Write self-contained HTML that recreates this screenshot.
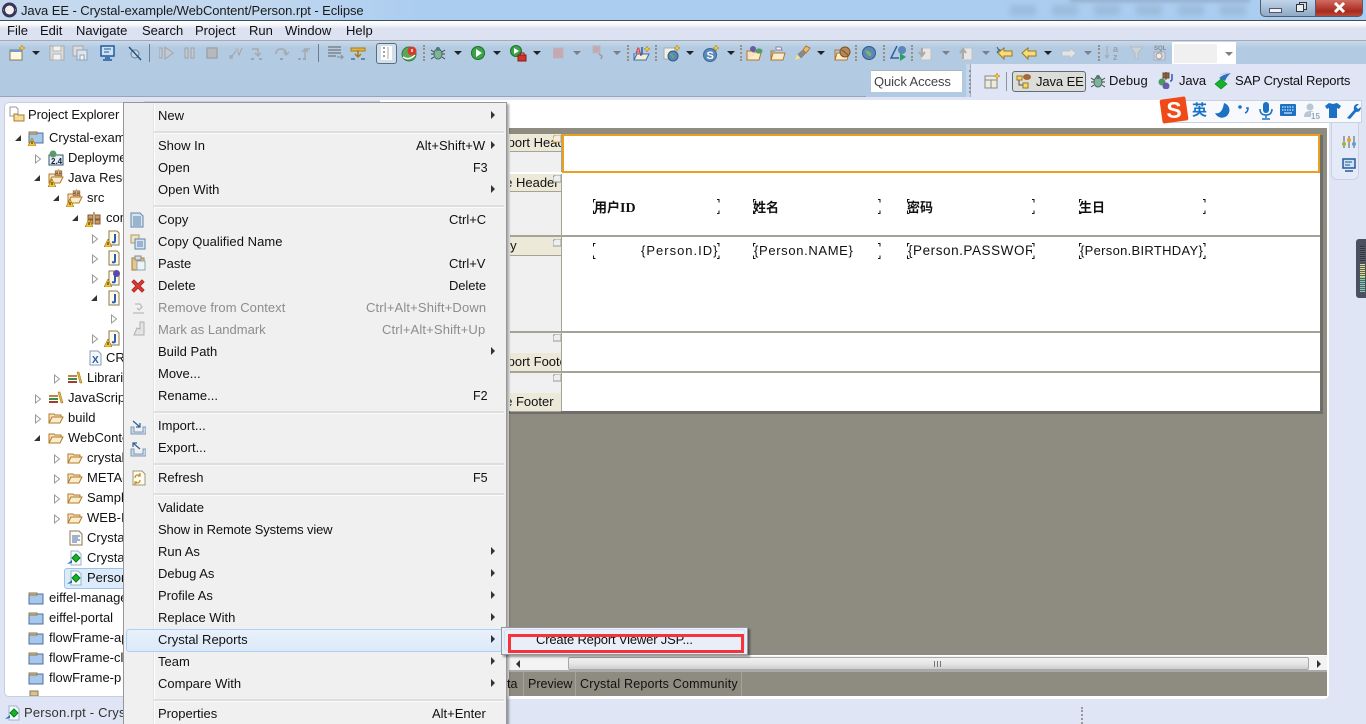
<!DOCTYPE html>
<html><head><meta charset="utf-8"><title>Java EE - Crystal-example/WebContent/Person.rpt - Eclipse</title>
<style>
html,body{margin:0;padding:0;width:1366px;height:724px;overflow:hidden;background:#dfe5f5}
body{position:relative;font:13px "Liberation Sans","Noto Sans CJK SC",sans-serif;color:#111}
div,span,svg{position:absolute}
.t{white-space:nowrap;line-height:16px;height:16px}
.g{color:#8d8d8d}
.d{width:0;height:0;border-left:4px solid transparent;border-right:4px solid transparent;border-top:4px solid #222;top:51px}
.dg{border-top-color:#7a7f88}
.s{width:1px;height:16px;top:45px;border-left:2px dotted #998f7e}
.ic{width:16px;height:16px}
.ta{width:0;height:0;border-left:5px solid #333;border-top:4px solid transparent;border-bottom:4px solid transparent}
.sep{left:154px;width:350px;height:2px;background:#dedede;border-bottom:1px solid #fafafa}
.ar{left:491px;width:0;height:0;border-left:4px solid #333;border-top:4px solid transparent;border-bottom:4px solid transparent}
.c{width:5px;height:5px;border:0 solid #111}
.rl{left:510px;width:51px;background:#ece9d8;border-bottom:1px solid #a5a296;overflow:hidden;height:18px;line-height:17px;white-space:nowrap}
</style></head><body>
<svg width="0" height="0" style="position:absolute"><defs>
<symbol id="fo" viewBox="0 0 16 16"><path d="M1 13V4h5l1 1h6v2" fill="#f7e3bd" stroke="#b07a2c"/><path d="M1 13l3-6h11l-3 6z" fill="#fbeccc" stroke="#b07a2c"/></symbol>
<symbol id="pj" viewBox="0 0 16 16"><path d="M1 4h14v10H1z" fill="#a8c7ec" stroke="#4d6f9c"/><path d="M1 3h8v2H1z" fill="#d9c28f" stroke="#8a7a55"/></symbol>
<symbol id="jf" viewBox="0 0 16 16"><path d="M3 1h8l2 2v12H3z" fill="#fdf9ea" stroke="#8d7a4c"/><path d="M9 4v7q0 2-3 1" fill="none" stroke="#2a5db0" stroke-width="2"/></symbol>
<symbol id="wn" viewBox="0 0 8 8"><path d="M4 0l4 8H0z" fill="#f4c430" stroke="#9a6d10" stroke-width=".6"/><path d="M4 3v3" stroke="#222"/></symbol>
<symbol id="rp" viewBox="0 0 16 16"><path d="M4 1h7l3 3v11H4z" fill="#f7fbff" stroke="#9db2c9"/><path d="M9 4l4 4-4 4-4-4z" fill="#12b52a" stroke="#0a7a1a"/><path d="M0 14l5-4v3z" fill="#2a6fc0"/></symbol>
<symbol id="pk" viewBox="0 0 16 16"><path d="M2 5h5v4H2zM9 5h5v4H9zM2 10h5v4H2zM9 10h5v4H9z" fill="#c69c6d" stroke="#8a5a2a"/><path d="M7 2h2v3H7z" fill="#c69c6d"/></symbol>
<symbol id="lb" viewBox="0 0 16 16"><path d="M1 5h9v2H1z" fill="#b88a3a"/><path d="M1 8h9v2H1z" fill="#3a8a5a"/><path d="M1 11h9v2H1z" fill="#a83a2a"/><path d="M10 2l2 0 3 11h-2z" fill="#e8b23a" stroke="#9a6d10" stroke-width=".5"/></symbol>
</defs></svg>

<!-- title bar -->
<div style="left:0;top:0;width:1366px;height:20px;background:linear-gradient(90deg,#c5d9ee 0,#c2d8ef 250px,#abcdf0 420px,#abcdf0 100%)"></div>
<div style="left:1010px;top:5px;width:240px;height:11px;background:repeating-linear-gradient(90deg,#8da8c6 0 26px,#abcdf0 26px 42px);filter:blur(3px);opacity:.45"></div>
<div style="left:1070px;top:-4px;width:180px;height:6px;background:#7d8ea6;filter:blur(2px);opacity:.5"></div>
<svg style="left:1px;top:1px" width="17" height="18"><circle cx="8.5" cy="9" r="7.5" fill="#3a3556"/><circle cx="8.5" cy="9" r="4.5" fill="#f2f2f2"/><path d="M2 9h13" stroke="#ddd" stroke-width=".7" stroke-dasharray="1 1"/></svg>
<div class="t" style="left:21px;top:3px;font-size:13px;letter-spacing:-.07px;color:#1a1a1a">Java EE - Crystal-example/WebContent/Person.rpt - Eclipse</div>
<div style="left:1260px;top:0;width:28px;height:16px;border:1px solid #4e5d70;border-top:0;border-radius:0 0 0 5px;background:linear-gradient(#c0d4e9,#8fa9c4)"></div>
<div style="left:1289px;top:0;width:26px;height:16px;border:1px solid #4e5d70;border-top:0;border-left:0;background:linear-gradient(#c0d4e9,#8fa9c4)"></div>
<div style="left:1316px;top:0;width:46px;height:16px;border:1px solid #4e5d70;border-top:0;border-left:0;border-radius:0 0 5px 0;background:linear-gradient(#d06a60,#a82a1e 70%,#b84a3a)"></div>
<div style="left:1269px;top:8px;width:11px;height:3px;background:#eef2f6;border:1px solid #556"></div>
<div style="left:1299px;top:2px;width:6px;height:6px;border:1px solid #333;background:#cfdbe8"></div>
<div style="left:1296px;top:4px;width:6px;height:6px;border:1px solid #333;background:#e6edf4"></div>
<svg style="left:1333px;top:1px" width="14" height="13"><path d="M2 2l9 9M11 2l-9 9" stroke="#fff" stroke-width="3"/></svg>

<!-- menu bar -->
<div style="left:0;top:20px;width:1366px;height:1px;background:#3f4c5c"></div>
<div style="left:0;top:21px;width:1366px;height:19px;background:linear-gradient(#fff 0,#f4f6fa 20%,#dde2f2 40%,#dde2f2 100%)"></div>
<div style="left:0;top:40px;width:1366px;height:1px;background:#a3a9b6"></div>
<div class="t" style="left:7px;top:23px">File</div>
<div class="t" style="left:40px;top:23px">Edit</div>
<div class="t" style="left:76px;top:23px">Navigate</div>
<div class="t" style="left:142px;top:23px">Search</div>
<div class="t" style="left:195px;top:23px">Project</div>
<div class="t" style="left:249px;top:23px">Run</div>
<div class="t" style="left:285px;top:23px">Window</div>
<div class="t" style="left:346px;top:23px">Help</div>

<!-- toolbar -->
<div style="left:0;top:41px;width:1366px;height:56px;background:linear-gradient(#c8d9ea 0,#b2cae2 7px,#b1cae2 100%)"></div>
<div style="left:0;top:96px;width:866px;height:1px;background:#9aa4b3"></div>
<div style="left:0;top:97px;width:1366px;height:3px;background:#dfe5f5"></div>
<div style="left:969px;top:64px;width:397px;height:36px;background:#dfe5f5"></div>
<div style="left:966px;top:64px;width:4px;height:33px;background:#c5d6ea;border-right:1px solid #9fb0c4"></div>

<!-- toolbar icons -->
<svg style="left:8px;top:44px" width="18" height="18"><path d="M2 6h12v10H2z" fill="#fff8e0" stroke="#8a7a55"/><path d="M2 6h12v2H2z" fill="#6f9bd0"/><path d="M14 1l1 2 2 1-2 1-1 2-1-2-2-1 2-1z" fill="#f6c93a" stroke="#a87c10" stroke-width=".5"/></svg>
<div class="d" style="left:32px"></div>
<svg style="left:49px;top:45px" width="16" height="16"><path d="M1 1h14v14H1z" fill="#dcdcdc" stroke="#a8a8a8"/><path d="M4 1h8v5H4zM4 9h8v6H4z" fill="#f2f2f2" stroke="#b5b5b5"/></svg>
<svg style="left:72px;top:45px" width="16" height="16"><path d="M1 1h10v10H1z" fill="#dcdcdc" stroke="#a8a8a8"/><path d="M5 5h10v10H5z" fill="#dde6ee" stroke="#8fa3b5"/><path d="M8 10h4v5H8z" fill="#f4f4f4" stroke="#8fa3b5"/></svg>
<svg style="left:100px;top:45px" width="15" height="16"><path d="M1 1h13v10H1z" fill="#cfe1f5" stroke="#215a9c" stroke-width="1.5"/><path d="M4 4h7M4 7h5" stroke="#215a9c"/><path d="M5 13h5M3 15h9" stroke="#215a9c" stroke-width="1.5"/></svg>
<svg style="left:128px;top:46px" width="15" height="15"><circle cx="7" cy="8" r="4" fill="#c9d6e3" stroke="#6a7f95"/><path d="M1 1l12 13" stroke="#1f4f86" stroke-width="1.4"/></svg>
<div style="left:149px;top:44px;width:1px;height:18px;background:#6f7d8c"></div>
<svg style="left:159px;top:46px" width="16" height="14"><path d="M0 2h3v10H0z" fill="#c6c9cd" stroke="#a0a4a8"/><path d="M6 1l8 6-8 6z" fill="#c6c9cd" stroke="#a0a4a8"/></svg>
<svg style="left:184px;top:46px" width="12" height="14"><path d="M1 2h3v10H1zM7 2h3v10H7z" fill="#c6c9cd" stroke="#a0a4a8"/></svg>
<svg style="left:206px;top:46px" width="12" height="14"><path d="M1 2h10v10H1z" fill="#b7b9bc" stroke="#a0a4a8" stroke-width="1.5"/></svg>
<svg style="left:228px;top:46px" width="15" height="14"><path d="M3 11L9 4l2 5 3-7" fill="none" stroke="#a0a4a8"/><circle cx="3" cy="11" r="2" fill="#a8acb0"/><circle cx="9" cy="4" r="2" fill="#b8bcc0"/></svg>
<svg style="left:250px;top:46px" width="16" height="15"><path d="M2 3h6v6M5 7l3 3 3-3" fill="none" stroke="#a6a9ad" stroke-width="1.5"/><path d="M1 13h3M9 13h3" stroke="#8c9097" stroke-width="1.3"/></svg>
<svg style="left:274px;top:46px" width="16" height="15"><path d="M2 8q0-5 5-5t5 5M10 6l2 3 3-3" fill="none" stroke="#a6a9ad" stroke-width="1.5"/><path d="M6 13h3" stroke="#8c9097" stroke-width="1.3"/></svg>
<svg style="left:297px;top:46px" width="16" height="15"><path d="M8 12V3h5M5 6l3-3 3 3" fill="none" stroke="#a6a9ad" stroke-width="1.5"/><path d="M1 13h3M6 13h3" stroke="#8c9097" stroke-width="1.3"/></svg>
<div style="left:318px;top:44px;width:1px;height:18px;background:#6f7d8c"></div>
<svg style="left:327px;top:45px" width="18" height="16"><path d="M1 2h13M1 5h13M1 8h13M1 11h8" stroke="#777" stroke-width="1.3"/><path d="M10 12h6M14 10l2 2-2 2" fill="none" stroke="#8a97a6" stroke-width="1.3"/></svg>
<svg style="left:350px;top:45px" width="17" height="16"><path d="M1 3h14v3H1z" fill="#e8b344" stroke="#a87c10"/><path d="M8 5v6M5 9l3 3 3-3" fill="none" stroke="#a87c10" stroke-width="1.5"/><path d="M1 14h4M11 14h4" stroke="#2f5f9a" stroke-width="1.2"/></svg>
<div style="left:376px;top:43px;width:19px;height:19px;border:1px solid #5f6b78;border-radius:3px;background:#d0dfee"></div>
<svg style="left:380px;top:46px" width="13" height="14"><path d="M1 0h11v14H1z" fill="#fff"/><path d="M3 2h2M3 6h2M3 10h2" stroke="#444"/><path d="M8 1v12" stroke="#aaa"/></svg>
<svg style="left:401px;top:45px" width="17" height="17"><circle cx="8" cy="9" r="7" fill="#5aa75a" stroke="#2e7a32"/><path d="M2 12q6 4 12-2" fill="none" stroke="#fff" stroke-width="1.5"/><circle cx="11" cy="6" r="4.5" fill="#d83a2a"/><path d="M11 4v3" stroke="#fff" stroke-width="1.3"/></svg>
<div class="s" style="left:423px"></div>
<svg style="left:430px;top:45px" width="16" height="16"><ellipse cx="8" cy="9" rx="4" ry="5" fill="#7eb59a" stroke="#3e6f5a"/><circle cx="8" cy="4" r="2" fill="#577"/><path d="M1 5l3 2M1 9h3M1 14l3-2M15 5l-3 2M15 9h-3M15 14l-3-2" stroke="#444"/></svg>
<div class="d" style="left:454px"></div>
<svg style="left:471px;top:46px" width="14" height="14"><circle cx="7" cy="7" r="6.5" fill="#3da34a" stroke="#1d6f2a"/><path d="M5 3l6 4-6 4z" fill="#fff"/></svg>
<div class="d" style="left:493px"></div>
<svg style="left:510px;top:45px" width="17" height="17"><circle cx="6" cy="6" r="5.5" fill="#3da34a" stroke="#1d6f2a"/><path d="M4 3l5 3-5 3z" fill="#fff"/><path d="M8 10h8v6H8z" fill="#d0342a" stroke="#8a1d16"/><path d="M10 10V8h4v2" fill="none" stroke="#8a1d16"/></svg>
<div class="d" style="left:533px"></div>
<svg style="left:553px;top:47px" width="11" height="12"><path d="M0 1h10v10H0z" fill="#c8a8b0" stroke="#b5b8bc"/></svg>
<div class="d dg" style="left:573px"></div>
<svg style="left:592px;top:45px" width="13" height="15"><path d="M1 1h7v7H1z" fill="#c8a8b0" stroke="#b5b8bc"/><path d="M7 9l3 2-1 3" fill="none" stroke="#99a" stroke-width="1.5"/></svg>
<div class="d dg" style="left:613px"></div>
<div class="s" style="left:627px"></div>
<svg style="left:633px;top:45px" width="18" height="17"><path d="M1 15l3-6h12l-3 6z" fill="#fbeccc" stroke="#3a6fae"/><path d="M1 15V8" stroke="#3a6fae"/><text x="2" y="9" font-size="9" font-weight="bold" fill="#d44">A</text><path d="M9 2v6q0 2-2 2" fill="none" stroke="#2a5db0" stroke-width="1.5"/><path d="M14 1l1 2 2 1-2 1-1 2-1-2-2-1 2-1z" fill="#f6c93a" stroke="#a87c10" stroke-width=".5"/></svg>
<div class="s" style="left:655px"></div>
<svg style="left:663px;top:45px" width="17" height="17"><path d="M1 3h11v11H1z" fill="#f1f1e8" stroke="#aaa"/><circle cx="10" cy="11" r="5" fill="#5a88b8" stroke="#34597f"/><path d="M7 9q3 1 3 4" stroke="#6fae5a" fill="none" stroke-width="1.5"/><path d="M14 0l1 2 2 1-2 1-1 2-1-2-2-1 2-1z" fill="#f6c93a" stroke="#a87c10" stroke-width=".5"/></svg>
<div class="d" style="left:686px"></div>
<svg style="left:703px;top:45px" width="17" height="17"><circle cx="7" cy="10" r="6.5" fill="#5a8abb" stroke="#3b6794"/><text x="3.500" y="14" font-size="11" font-weight="bold" fill="#fff" font-family="Liberation Sans">S</text><path d="M13 0l1 2 2 1-2 1-1 2-1-2-2-1 2-1z" fill="#f6c93a" stroke="#a87c10" stroke-width=".5"/></svg>
<div class="d" style="left:727px"></div>
<div class="s" style="left:740px"></div>
<svg style="left:746px;top:45px" width="17" height="17"><path d="M1 15l2-7h12l-2 7z" fill="#fbeccc" stroke="#b07a2c"/><path d="M1 15V6h5l1 1h6" fill="#f7e3bd" stroke="#b07a2c"/><circle cx="7" cy="4" r="3" fill="#6a5aa8"/><ellipse cx="13" cy="6" rx="3.500" ry="2.500" fill="#4da06a"/></svg>
<svg style="left:770px;top:46px" width="16" height="15"><path d="M1 14l2-7h12l-2 7z" fill="#fbeccc" stroke="#b07a2c"/><path d="M1 14V5h4" fill="none" stroke="#b07a2c"/><path d="M6 1h5l1 3H6z" fill="#f3f5f8" stroke="#889"/></svg>
<svg style="left:794px;top:45px" width="17" height="16"><path d="M1 15l2-5 3 3z" fill="#fbe67a"/><path d="M4 9l3 4 5-5-3-3z" fill="#8a8a8a" stroke="#666" stroke-width=".5"/><path d="M9 5l3-4 4 2-4 5z" fill="#f0b878" stroke="#b07a2c"/></svg>
<div class="d" style="left:817px"></div>
<svg style="left:834px;top:46px" width="17" height="15"><path d="M1 14l2-7h12l-2 7z" fill="#fbeccc" stroke="#b07a2c"/><path d="M1 14V4h5l1 2" fill="none" stroke="#b07a2c"/><circle cx="11" cy="6" r="5" fill="#b88858" stroke="#7a5028"/><path d="M8 4l6 5" stroke="#7a5028"/></svg>
<div class="s" style="left:855px"></div>
<svg style="left:862px;top:46px" width="14" height="14"><circle cx="7" cy="7" r="6.500" fill="#5a88b8" stroke="#2f5a86"/><path d="M3 5q3-1 5 1t1 4q-3 0-4-2z" fill="#8ab062"/></svg>
<div class="s" style="left:883px"></div>
<svg style="left:890px;top:45px" width="17" height="17"><circle cx="12" cy="5" r="4" fill="#5a88b8"/><path d="M7 1L1 13h8" fill="none" stroke="#2f5f9a" stroke-width="1.400"/><path d="M10 8l6 4-6 4z" fill="#2aa060"/></svg>
<div class="s" style="left:911px"></div>
<svg style="left:918px;top:45px" width="14" height="16"><path d="M3 3h10v12H3z" fill="#e6e6e6" stroke="#c0c0c0"/><path d="M4 3v7M1 7l3 4 3-4" fill="none" stroke="#aaa" stroke-width="2"/></svg>
<div class="d dg" style="left:942px"></div>
<svg style="left:959px;top:45px" width="14" height="16"><path d="M3 3h10v12H3z" fill="#e6e6e6" stroke="#c0c0c0"/><path d="M4 14V6M1 8l3-4 3 4" fill="none" stroke="#aaa" stroke-width="2"/></svg>
<div class="d dg" style="left:982px"></div>
<svg style="left:996px;top:45px" width="17" height="15"><path d="M1 2l1 2 2 1-2 1-1 2" fill="none" stroke="#2f5f9a"/><path d="M2 8l6-5v3h8v5H8v3z" fill="#f6dc7a" stroke="#9a7a20"/></svg>
<svg style="left:1021px;top:45px" width="16" height="15"><path d="M1 8l6-5v3h8v5H7v3z" fill="#f6dc7a" stroke="#9a7a20"/></svg>
<div class="d" style="left:1044px"></div>
<svg style="left:1061px;top:45px" width="16" height="15"><path d="M15 8L9 3v3H1v5h8v3z" fill="#e2e4e6" stroke="#c0c4c8"/></svg>
<div class="d dg" style="left:1084px"></div>
<div class="s" style="left:1098px"></div>
<svg style="left:1104px;top:44px" width="18" height="17"><path d="M3 2v12M1 11l2 3 2-3" fill="none" stroke="#a3a8ae"/><text x="9" y="8" font-size="9" font-weight="bold" fill="#9a9fa5" font-family="Liberation Sans">a</text><text x="9" y="16" font-size="9" font-weight="bold" fill="#9a9fa5" font-family="Liberation Sans">z</text></svg>
<svg style="left:1130px;top:46px" width="13" height="14"><path d="M0 1h13L8 7v6H5V7z" fill="#cdd3d9" stroke="#b5bac0"/></svg>
<svg style="left:1151px;top:44px" width="18" height="18"><text x="3" y="6" font-size="6" font-weight="bold" fill="#888" font-family="Liberation Sans">SQL</text><path d="M3 8h11v8H3z" fill="#d4d9df" stroke="#aab"/><circle cx="8" cy="12" r="3" fill="#eee" stroke="#999"/></svg>
<div style="left:1172px;top:42px;width:64px;height:22px;background:#fff"></div>
<div style="left:1174px;top:44px;width:43px;height:19px;background:#f0f0f0"></div>
<div class="d dg" style="left:1225px;top:52px"></div>

<!-- quick access + perspectives -->
<div class="t" style="left:871px;top:70px;width:91px;height:22px;background:#fff;border-top:1px solid #a9b4c0;box-sizing:border-box;padding:2px 0 0 3px;color:#444;line-height:18px;letter-spacing:-.1px">Quick Access</div>
<div style="left:969px;top:70px;border-left:2px dotted #8a93a0;height:23px;width:0"></div>
<svg style="left:984px;top:73px" width="16" height="16"><path d="M1 3h12v12H1z" fill="#f2ead6" stroke="#7f8a96"/><path d="M1 7h12M7 7v8" stroke="#7f8a96"/><path d="M13 0l1 2 2 1-2 1-1 2-1-2-2-1 2-1z" fill="#f6c93a" stroke="#a87c10" stroke-width=".5"/></svg>
<div style="left:1006px;top:72px;width:1px;height:19px;background:#8a93a0"></div>
<div style="left:1012px;top:71px;width:72px;height:19px;border:1px solid #5f6b78;border-radius:3px;background:#dcdcd8"></div>
<svg style="left:1016px;top:73px" width="17" height="16"><path d="M1 3h5v4H1zM7 10h5v5H7z" fill="#f6d96a" stroke="#9a7a20"/><path d="M3 7v5h4" fill="none" stroke="#555"/><ellipse cx="11" cy="4" rx="4" ry="3" fill="#a5693a"/></svg>
<div class="t" style="left:1036px;top:74px;letter-spacing:-.1px">Java EE</div>
<svg style="left:1090px;top:73px" width="16" height="16"><ellipse cx="8" cy="9" rx="4" ry="5" fill="#7eb59a" stroke="#3e6f5a"/><circle cx="8" cy="4" r="2" fill="#577"/><path d="M1 5l3 2M1 9h3M1 14l3-2M15 5l-3 2M15 9h-3M15 14l-3-2" stroke="#444"/></svg>
<div class="t" style="left:1109px;top:73px;letter-spacing:.1px">Debug</div>
<svg style="left:1158px;top:72px" width="18" height="17"><path d="M5 1h6v5H5zM8 0v8" fill="#8a6a4a" stroke="#6a4a2a"/><circle cx="4" cy="10" r="3.500" fill="#4a9a5a"/><circle cx="8" cy="14" r="3.500" fill="#6a5aa8"/><path d="M14 2v5q0 2-2 2" fill="none" stroke="#2a5db0" stroke-width="1.500"/></svg>
<div class="t" style="left:1179px;top:73px;letter-spacing:-.1px">Java</div>
<svg style="left:1214px;top:72px" width="18" height="18"><path d="M5 6q5-4 12-5-4 3-6 8z" fill="#2a6fc0"/><path d="M6 3q4-2 8-2" stroke="#bcd" fill="none"/><path d="M7 7l6 5-6 5-6-5z" fill="#12b52a" stroke="#0a7a1a" stroke-width=".6"/></svg>
<div class="t" style="left:1235px;top:73px;letter-spacing:-.2px">SAP Crystal Reports</div>

<!-- left panel -->
<div style="left:4px;top:102px;width:140px;height:595px;background:#fff;border:1px solid #c6cfdf;border-radius:5px;box-sizing:border-box"></div>
<div style="left:144px;top:101px;width:236px;height:2px;background:#c6cfdd"></div>
<svg style="left:9px;top:106px" width="16" height="16"><path d="M1 1h6l2 2v7H1z" fill="#fff" stroke="#999"/><path d="M5 8h3l1 1h6v6H5z" fill="#f6dc9a" stroke="#a87c2c"/></svg>
<div class="t" style="left:28px;top:107px;letter-spacing:-.08px">Project Explorer</div>

<div class="t" style="left:49px;top:130px">Crystal-example</div>
<svg style="left:28px;top:129px" class="ic"><use href="#pj"/></svg>
<svg style="left:28px;top:138px" width="8" height="8"><use href="#wn"/></svg>
<div class="t" style="left:68px;top:150px">Deployment</div>
<svg style="left:48px;top:150px" class="ic"><path d="M1 5h14v10H1z" fill="#e9f0f7" stroke="#356"/><circle cx="5" cy="4" r="3.500" fill="#5a9a6a"/><text x="3" y="14" font-size="8" font-weight="bold" fill="#124">2.4</text></svg>
<div class="t" style="left:68px;top:170px">Java Resources</div>
<svg style="left:48px;top:170px" class="ic"><use href="#fo"/></svg>
<svg style="left:54px;top:168px" width="9" height="9"><use href="#pk"/></svg>
<svg style="left:48px;top:179px" width="8" height="8"><use href="#wn"/></svg>
<div class="t" style="left:87px;top:190px">src</div>
<svg style="left:67px;top:190px" class="ic"><use href="#fo"/></svg>
<svg style="left:72px;top:188px" width="9" height="9"><use href="#pk"/></svg>
<svg style="left:66px;top:199px" width="8" height="8"><use href="#wn"/></svg>
<div class="t" style="left:106px;top:210px">com</div>
<svg style="left:86px;top:210px" class="ic"><use href="#pk"/></svg>
<svg style="left:85px;top:219px" width="8" height="8"><use href="#wn"/></svg>
<svg style="left:106px;top:230px" class="ic"><use href="#jf"/></svg><svg style="left:104px;top:239px" width="8" height="8"><use href="#wn"/></svg>
<svg style="left:106px;top:250px" class="ic"><use href="#jf"/></svg>
<svg style="left:106px;top:270px" class="ic"><use href="#jf"/></svg><svg style="left:104px;top:279px" width="8" height="8"><use href="#wn"/></svg>
<div style="left:113px;top:270px;width:7px;height:7px;border-radius:50%;background:#5a4aa8"></div>
<svg style="left:106px;top:290px" class="ic"><use href="#jf"/></svg>
<svg style="left:106px;top:330px" class="ic"><use href="#jf"/></svg><svg style="left:104px;top:339px" width="8" height="8"><use href="#wn"/></svg>
<div class="t" style="left:106px;top:350px">CRConfig</div>
<svg style="left:87px;top:350px" class="ic"><path d="M3 1h8l3 3v11H3z" fill="#f3f8ff" stroke="#8a9ab0"/><text x="5" y="13" font-size="10" font-weight="bold" fill="#2a5a9a" font-family="Liberation Sans">X</text></svg>
<div class="t" style="left:87px;top:370px">Libraries</div>
<svg style="left:67px;top:370px" class="ic"><use href="#lb"/></svg>
<div class="t" style="left:68px;top:390px">JavaScript</div>
<svg style="left:48px;top:390px" class="ic"><use href="#lb"/></svg>
<div class="t" style="left:68px;top:410px">build</div>
<svg style="left:48px;top:410px" class="ic"><use href="#fo"/></svg>
<div class="t" style="left:68px;top:430px">WebContent</div>
<svg style="left:48px;top:430px" class="ic"><use href="#fo"/></svg>
<div class="t" style="left:87px;top:450px">crystal</div>
<svg style="left:67px;top:450px" class="ic"><use href="#fo"/></svg>
<div class="t" style="left:87px;top:470px">META-INF</div>
<svg style="left:67px;top:470px" class="ic"><use href="#fo"/></svg>
<div class="t" style="left:87px;top:490px">Sample</div>
<svg style="left:67px;top:490px" class="ic"><use href="#fo"/></svg>
<div class="t" style="left:87px;top:510px">WEB-INF</div>
<svg style="left:67px;top:510px" class="ic"><use href="#fo"/></svg>
<div class="t" style="left:87px;top:530px">Crystal</div>
<svg style="left:68px;top:530px" class="ic"><path d="M2 1h9l3 3v11H2z" fill="#fbfbf3" stroke="#8a7a55"/><path d="M4 6h8M4 8h6M4 10h8M4 12h5" stroke="#4a6aa8"/></svg>
<div class="t" style="left:87px;top:550px">Crystal</div>
<svg style="left:67px;top:550px" class="ic"><use href="#rp"/></svg>
<div style="left:64px;top:568px;width:70px;height:19px;background:#dcebfa;border:1px solid #9cc4ea;border-radius:3px"></div>
<div class="t" style="left:87px;top:570px">Person.rpt</div>
<svg style="left:67px;top:570px" class="ic"><use href="#rp"/></svg>
<div class="t" style="left:49px;top:590px">eiffel-manager</div>
<svg style="left:28px;top:590px" class="ic"><use href="#pj"/></svg>
<div class="t" style="left:49px;top:610px">eiffel-portal</div>
<svg style="left:28px;top:610px" class="ic"><use href="#pj"/></svg>
<div class="t" style="left:49px;top:630px">flowFrame-api</div>
<svg style="left:28px;top:630px" class="ic"><use href="#pj"/></svg>
<div class="t" style="left:49px;top:650px">flowFrame-cl</div>
<svg style="left:28px;top:650px" class="ic"><use href="#pj"/></svg>
<div class="t" style="left:49px;top:670px">flowFrame-p</div>
<svg style="left:28px;top:670px" class="ic"><use href="#pj"/></svg>
<svg style="left:28px;top:690px" width="16" height="6"><path d="M2 1h8v5H2z" fill="#d9c28f" stroke="#8a7a55"/></svg>

<!-- tree arrows -->
<svg style="left:0;top:102px" width="124" height="500">
<g fill="#333"><path d="M21 33v6h-6zM40 73v6h-6zM59 93v6h-6zM78 113v6h-6zM97 193v6h-6zM40 333v6h-6z"/></g>
<g fill="#fff" stroke="#999"><path d="M35.500 53v8l5-4zM54.500 273v8l5-4zM35.500 293v8l5-4zM35.500 313v8l5-4zM54.500 353v8l5-4zM54.500 373v8l5-4zM54.500 393v8l5-4zM54.500 413v8l5-4zM92.500 133v8l5-4zM92.500 153v8l5-4zM92.500 173v8l5-4zM92.500 233v8l5-4zM111.500 213v8l5-4z"/></g>
</svg>

<!-- editor -->
<div style="left:380px;top:100px;width:949px;height:599px;background:#fff;border-radius:0 0 5px 0"></div>
<div style="left:509px;top:128px;width:818px;height:568px;background:#8e8b81"></div>
<div style="left:509px;top:134px;width:811px;height:277px;background:#fff"></div>
<div style="left:561px;top:134px;width:1px;height:277px;background:#a5a296"></div>
<div style="left:1320px;top:135px;width:3px;height:279px;background:#6f6e68"></div>
<div style="left:509px;top:411px;width:814px;height:3px;background:#6f6e68"></div>
<div style="left:509px;top:134px;width:52px;height:277px;background:#f0f0f0"></div>
<div style="left:562px;top:134px;width:758px;height:39px;border:2px solid #e9a020;box-sizing:border-box"></div>
<div style="left:510px;top:235px;width:810px;height:2px;background:#a5a296"></div>
<div style="left:510px;top:331px;width:810px;height:2px;background:#a5a296"></div>
<div style="left:510px;top:371px;width:810px;height:2px;background:#a5a296"></div>
<div style="left:510px;top:172px;width:52px;height:2px;background:#fff"></div>
<div class="rl" style="top:134px;height:17px;text-indent:-19px">Report Header</div>
<div class="rl" style="top:174px;height:17px;text-indent:-28px">Page Header</div>
<div class="rl" style="top:237px;text-indent:-23px">Body</div>
<div class="rl" style="top:353px;text-indent:-19px">Report Footer</div>
<div class="rl" style="top:393px;text-indent:-28px">Page Footer</div>
<svg style="left:553px;top:135px" width="8" height="8"><path d="M0 7V2l2-2h6v7z" fill="#eee" stroke="#e9a020"/></svg>
<svg style="left:553px;top:175px" width="8" height="8"><path d="M0 7V2l2-2h6v7z" fill="#eee" stroke="#999"/></svg>
<svg style="left:553px;top:239px" width="8" height="8"><path d="M0 7V2l2-2h6v7z" fill="#eee" stroke="#999"/></svg>
<svg style="left:553px;top:334px" width="8" height="8"><path d="M0 7V2l2-2h6v7z" fill="#eee" stroke="#999"/></svg>
<svg style="left:553px;top:374px" width="8" height="8"><path d="M0 7V2l2-2h6v7z" fill="#eee" stroke="#999"/></svg>
<div class="t" style="left:594px;top:200px;font-weight:bold;font-size:13px">用户<b style="font:bold 14px 'Liberation Serif',serif">ID</b></div>
<div class="t" style="left:753px;top:200px;font-weight:bold;font-size:13px">姓名</div>
<div class="t" style="left:907px;top:200px;font-weight:bold;font-size:13px">密码</div>
<div class="t" style="left:1079px;top:200px;font-weight:bold;font-size:13px">生日</div>
<div class="t" style="left:641px;top:243px;letter-spacing:1px">{Person.ID}</div>
<div class="t" style="left:754px;top:243px;letter-spacing:.65px">{Person.NAME}</div>
<div class="t" style="left:908px;top:243px;width:124px;overflow:hidden;letter-spacing:.55px;font-size:13.5px">{Person.PASSWORD}</div>
<div class="t" style="left:1080px;top:243px;letter-spacing:.3px">{Person.BIRTHDAY}</div>
<svg style="left:0;top:0" width="1366" height="300" fill="none" stroke="#111">
<path d="M595.500 199.500h-2v3M595.500 213.500h-2v-3M717 199.500h2v3M717 213.500h2v-3M755.500 199.500h-2v3M755.500 213.500h-2v-3M878 199.500h2v3M878 213.500h2v-3M909.500 199.500h-2v3M909.500 213.500h-2v-3M1032 199.500h2v3M1032 213.500h2v-3M1081.500 199.500h-2v3M1081.500 213.500h-2v-3M1203 199.500h2v3M1203 213.500h2v-3"/>
<path d="M595.500 243.500h-2v3M595.500 258.500h-2v-3M717 243.500h2v3M717 258.500h2v-3M755.500 243.500h-2v3M755.500 258.500h-2v-3M878 243.500h2v3M878 258.500h2v-3M909.500 243.500h-2v3M909.500 258.500h-2v-3M1032 243.500h2v3M1032 258.500h2v-3M1081.500 243.500h-2v3M1081.500 258.500h-2v-3M1203 243.500h2v3M1203 258.500h2v-3"/>
</svg>

<!-- scrollbar -->
<div style="left:509px;top:655px;width:818px;height:17px;background:#f3f3f3;border-top:1px solid #fff;border-bottom:2px solid #aaa;box-sizing:border-box"></div>
<div style="left:568px;top:657px;width:741px;height:13px;border:1px solid #a8a8a8;border-radius:2px;box-sizing:border-box;background:linear-gradient(#f2f2f2,#e6e6e6 50%,#cfcfcf)"></div>
<div class="t" style="left:934px;width:8px;height:6px;background:repeating-linear-gradient(90deg,#777 0 1px,transparent 1px 3px);top:661px"></div>
<div style="left:516px;top:660px;width:0;height:0;border-right:4px solid #333;border-top:4px solid transparent;border-bottom:4px solid transparent"></div>
<div class="ta" style="left:1317px;top:660px;border-left-width:4px"></div>
<!-- tabs -->
<div style="left:509px;top:672px;width:818px;height:24px;background:#8e8b81"></div>
<div class="t" style="left:507px;top:676px;font-size:12.5px">ta</div>
<div style="left:523px;top:672px;width:1px;height:24px;background:#a5a296"></div>
<div class="t" style="left:528px;top:676px;font-size:12.5px">Preview</div>
<div style="left:575px;top:672px;width:1px;height:24px;background:#a5a296"></div>
<div class="t" style="left:580px;top:676px;font-size:12.5px;letter-spacing:.2px">Crystal Reports Community</div>
<div style="left:741px;top:672px;width:1px;height:24px;background:#a5a296"></div>

<!-- right trim -->
<div style="left:1331px;top:100px;width:28px;height:80px;background:#e4eaf8;border:1px solid #c9d1e2;border-top:0;border-radius:0 0 6px 6px;box-sizing:border-box"></div>
<svg style="left:1342px;top:135px" width="14" height="14"><path d="M2 1v12M7 1v12M12 1v12" stroke="#556"/><circle cx="2" cy="9" r="2" fill="#9ab83a"/><circle cx="7" cy="5" r="2" fill="#e8a020"/><circle cx="12" cy="9" r="2" fill="#5aa0d0"/></svg>
<svg style="left:1342px;top:158px" width="14" height="14"><path d="M1 1h12v9H1z" fill="#cfe1f5" stroke="#215a9c" stroke-width="1.5"/><path d="M3 4h7M3 7h5" stroke="#215a9c"/><path d="M3 13h8" stroke="#215a9c" stroke-width="1.5"/></svg>
<div style="left:1356px;top:239px;width:10px;height:59px;background:#4b505e;border-radius:3px 0 0 3px"></div>
<div style="left:1360px;top:246px;width:5px;height:16px;background:repeating-linear-gradient(#32353f 0 1px,#5a5f6c 1px 2px)"></div>
<div style="left:1360px;top:264px;width:5px;height:13px;background:repeating-linear-gradient(#e2dc7a 0 1px,#5a5f6c 1px 2px)"></div>
<div style="left:1360px;top:277px;width:5px;height:15px;background:repeating-linear-gradient(#7ad0b0 0 1px,#5a5f6c 1px 2px)"></div>

<!-- IME bar -->
<div style="left:1170px;top:100px;width:192px;height:23px;background:#f7f9fc;border:1px solid #c9d3df;box-sizing:border-box"></div>
<div style="left:1161px;top:98px;width:26px;height:24px;background:#f04a16;transform:rotate(-8deg);border-radius:2px"></div>
<div class="t" style="left:1161px;top:101px;width:26px;text-align:center;color:#fff;font:bold 23px/19px 'Liberation Sans',sans-serif;height:19px">S</div>
<div class="t" style="left:1192px;top:103px;color:#1b72c4;font-weight:bold;font-size:15px">英</div>
<svg style="left:1215px;top:103px" width="15" height="16"><path d="M9 0a7.500 7.500 0 1 1-9 10q7 2 9-10z" fill="#1b72c4"/></svg>
<svg style="left:1238px;top:105px" width="12" height="12"><circle cx="2" cy="2" r="1.800" fill="#1b72c4"/><path d="M8 3h2q0 4-3 5" fill="none" stroke="#1b72c4" stroke-width="1.600"/></svg>
<svg style="left:1259px;top:102px" width="14" height="18"><rect x="4" y="0" width="6" height="11" rx="3" fill="#1b72c4"/><path d="M1 7q0 6 6 6t6-6M7 13v3M3 17h8" fill="none" stroke="#1b72c4" stroke-width="1.500"/></svg>
<svg style="left:1280px;top:104px" width="16" height="13"><rect width="16" height="12" rx="1" fill="#1b72c4"/><path d="M2 3h12M2 6h12" stroke="#fff" stroke-dasharray="1.500 1"/><path d="M4 9h8" stroke="#fff"/></svg>
<svg style="left:1304px;top:103px" width="17" height="16"><circle cx="6" cy="4" r="3.500" fill="#b9c6d4"/><path d="M0 14q0-6 6-6t4 6z" fill="#b9c6d4"/><rect x="7" y="9" width="10" height="7" fill="#f7f9fc"/><text x="7" y="16" font-size="8" font-weight="bold" fill="#98a6b6" font-family="Liberation Sans">15</text></svg>
<svg style="left:1325px;top:103px" width="16" height="15"><path d="M4 0l4 1 4-1 4 3-2 3-2-1v10H4V5L2 6 0 3z" fill="#1b72c4"/></svg>
<svg style="left:1346px;top:103px" width="15" height="16"><path d="M1 15l7-8q-1-5 3-6l2 0-3 3 2 2 3-2q0 5-5 5l-6 7z" fill="#1b72c4"/></svg>

<!-- status bar -->
<svg style="left:5px;top:705px" class="ic"><use href="#rp"/></svg>
<div class="t" style="left:24px;top:705px;color:#333;letter-spacing:.2px">Person.rpt - Crystal</div>
<div style="left:1081px;top:707px;width:0;height:17px;border-left:2px dotted #999"></div>

<!-- context menu -->
<div style="left:123px;top:102px;width:384px;height:622px;background:#f0f0f0;border:1px solid #979797;border-bottom:0;box-sizing:border-box;box-shadow:2px 2px 2px rgba(0,0,0,.35)"></div>
<div style="left:153px;top:104px;width:1px;height:620px;background:#e2e3e3;border-right:1px solid #fff"></div>
<div class="sep" style="top:131px"></div>
<div class="sep" style="top:205px"></div>
<div class="sep" style="top:411px"></div>
<div class="sep" style="top:463px"></div>
<div class="sep" style="top:493px"></div>
<div class="sep" style="top:699px"></div>
<div style="left:126px;top:629px;width:375px;height:21px;border:1px solid #aecff7;border-radius:3px;background:linear-gradient(#e8f1fb,#dce9f8)"></div>
<div class="t" style="left:158px;top:108px">New</div><div class="ar" style="top:111px"></div>
<div class="t" style="left:158px;top:138px">Show In</div><div class="t" style="left:416px;top:138px;letter-spacing:.05px">Alt+Shift+W</div><div class="ar" style="top:141px"></div>
<div class="t" style="left:158px;top:160px">Open</div><div class="t" style="left:473px;top:160px;font-size:12.5px">F3</div>
<div class="t" style="left:158px;top:182px">Open With</div><div class="ar" style="top:185px"></div>
<div class="t" style="left:158px;top:212px">Copy</div><div class="t" style="left:449px;top:212px">Ctrl+C</div>
<div class="t" style="left:158px;top:234px;letter-spacing:.05px">Copy Qualified Name</div>
<div class="t" style="left:158px;top:256px">Paste</div><div class="t" style="left:449px;top:256px">Ctrl+V</div>
<div class="t" style="left:158px;top:278px">Delete</div><div class="t" style="left:449px;top:278px;letter-spacing:-.1px">Delete</div>
<div class="t g" style="left:158px;top:300px;letter-spacing:.05px">Remove from Context</div><div class="t g" style="left:366px;top:300px;letter-spacing:.15px">Ctrl+Alt+Shift+Down</div>
<div class="t g" style="left:158px;top:322px">Mark as Landmark</div><div class="t g" style="left:382px;top:322px;letter-spacing:.15px">Ctrl+Alt+Shift+Up</div>
<div class="t" style="left:158px;top:344px">Build Path</div><div class="ar" style="top:347px"></div>
<div class="t" style="left:158px;top:366px">Move...</div>
<div class="t" style="left:158px;top:388px">Rename...</div><div class="t" style="left:473px;top:388px;font-size:12.5px">F2</div>
<div class="t" style="left:158px;top:418px">Import...</div>
<div class="t" style="left:158px;top:440px">Export...</div>
<div class="t" style="left:158px;top:470px">Refresh</div><div class="t" style="left:473px;top:470px;font-size:12.5px">F5</div>
<div class="t" style="left:158px;top:500px">Validate</div>
<div class="t" style="left:158px;top:522px;letter-spacing:-.15px">Show in Remote Systems view</div>
<div class="t" style="left:158px;top:544px">Run As</div><div class="ar" style="top:547px"></div>
<div class="t" style="left:158px;top:566px">Debug As</div><div class="ar" style="top:569px"></div>
<div class="t" style="left:158px;top:588px">Profile As</div><div class="ar" style="top:591px"></div>
<div class="t" style="left:158px;top:610px">Replace With</div><div class="ar" style="top:613px"></div>
<div class="t" style="left:158px;top:632px">Crystal Reports</div><div class="ar" style="top:635px"></div>
<div class="t" style="left:158px;top:654px">Team</div><div class="ar" style="top:657px"></div>
<div class="t" style="left:158px;top:676px">Compare With</div><div class="ar" style="top:679px"></div>
<div class="t" style="left:158px;top:706px">Properties</div><div class="t" style="left:432px;top:706px">Alt+Enter</div>

<!-- menu icons -->
<svg style="left:130px;top:212px" class="ic"><path d="M1 1h9l3 3v11H1z" fill="#d7e3f0" stroke="#5f86ad"/><path d="M3 5h8M3 7h8M3 9h8M3 11h8M3 13h8" stroke="#5f86ad"/></svg>
<svg style="left:130px;top:234px" class="ic"><path d="M1 1h8v8H1z" fill="#f0e2c0" stroke="#b09a60"/><path d="M5 5h10v10H5z" fill="#d7e3f0" stroke="#5f86ad"/><path d="M7 8h6M7 10h6M7 12h6" stroke="#5f86ad"/></svg>
<svg style="left:131px;top:255px" class="ic"><path d="M1 3h12v12H1z" fill="#e8c88a" stroke="#a08040"/><path d="M4 1h6v4H4z" fill="#ddd" stroke="#888"/><path d="M6 6h8v9H6z" fill="#eef3f9" stroke="#8aa"/></svg>
<svg style="left:130px;top:278px" class="ic"><path d="M2 4l2-2 4 4 4-4 2 2-4 4 4 4-2 2-4-4-4 4-2-2 4-4z" fill="#dd3b35" stroke="#b02a25" stroke-width="1"/></svg>
<svg style="left:130px;top:300px" class="ic"><path d="M5 4h5l2 3-3 3-2-2M3 13h11" fill="none" stroke="#bbb" stroke-width="1.300"/></svg>
<svg style="left:131px;top:321px" class="ic"><path d="M9 1h4v13H3l3-7 3 1z" fill="#e4e4e4" stroke="#b0b0b0"/></svg>
<svg style="left:130px;top:419px" class="ic"><path d="M1 8h3v5h9V8h3v7H1z" fill="#c9d9ea" stroke="#7f9ab5"/><path d="M3 2l7 6M10 4v4H6" fill="none" stroke="#2f5f9a" stroke-width="1.200"/></svg>
<svg style="left:130px;top:441px" class="ic"><path d="M1 8h3v5h9V8h3v7H1z" fill="#c9d9ea" stroke="#7f9ab5"/><path d="M10 8L3 2M3 6V2h4" fill="none" stroke="#2f5f9a" stroke-width="1.200"/></svg>
<svg style="left:130px;top:470px" class="ic"><path d="M3 1h9l3 3v11H3z" fill="#fdfbf2" stroke="#9a9a80"/><path d="M5 8q0-3 3-3l2 0M10 3v3H8M10 10q0 3-3 3l-2 0M5 15v-3h2" fill="none" stroke="#c99020" stroke-width="1.300"/></svg>

<!-- submenu -->
<div style="left:501px;top:627px;width:247px;height:28px;background:#e9eef8;border:1px solid #979797;box-sizing:border-box;box-shadow:2px 2px 2px rgba(0,0,0,.4)"></div>
<div style="left:504px;top:629px;width:241px;height:22px;border:1px solid #cfe0f5;border-radius:3px;box-sizing:border-box"></div>
<div class="t" style="left:536px;top:632px;letter-spacing:-.17px">Create Report Viewer JSP...</div>
<div style="left:508px;top:634px;width:236px;height:19px;border:3px solid #f5333a;box-sizing:border-box"></div>
</body></html>
